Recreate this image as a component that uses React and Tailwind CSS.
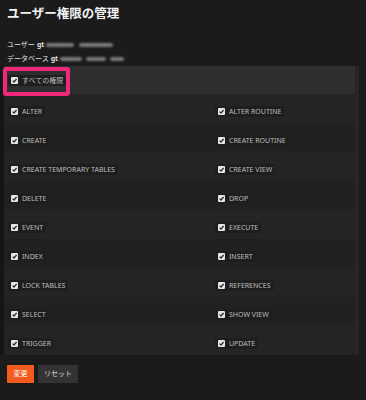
import React from 'react';

const PRIVS = [
  ['ALTER', 'ALTER ROUTINE'],
  ['CREATE', 'CREATE ROUTINE'],
  ['CREATE TEMPORARY TABLES', 'CREATE VIEW'],
  ['DELETE', 'DROP'],
  ['EVENT', 'EXECUTE'],
  ['INDEX', 'INSERT'],
  ['LOCK TABLES', 'REFERENCES'],
  ['SELECT', 'SHOW VIEW'],
  ['TRIGGER', 'UPDATE'],
];

const Check = () => (
  <svg width="7" height="7" viewBox="0 0 7 7" className="shrink-0">
    <rect x="0" y="0" width="7" height="7" rx="1" fill="#e6e6e6" />
    <path d="M1.6 3.6 L3 5 L5.6 2" stroke="#2a2a2a" strokeWidth="1.2" fill="none" />
  </svg>
);

const Priv = ({ label }) => (
  <span className="inline-flex items-center gap-[4px] bg-[#1e1e1e] px-[3px] py-[2px] rounded-[2px]">
    <Check />
    <span className="text-[7px] text-[#bdbdbd] leading-none">{label}</span>
  </span>
);

export default function App() {
  return (
    <div
      className="w-[366px] h-[400px] bg-[#1b1b1b] text-white overflow-hidden"
      style={{ fontFamily: '"Noto Sans", "Noto Sans CJK JP", sans-serif' }}
    >
      <h1 className="pl-[7px] pt-[5px] text-[12.5px] font-bold leading-[18px] text-[#f2f2f2]">
        ユーザー権限の管理
      </h1>

      <div className="mt-[17px] pl-[7px] flex flex-col gap-[5px] text-[7px] leading-[9px] text-[#e0e0e0]">
        <div className="flex items-center gap-[2px]">
          <span>ユーザー</span>
          <span className="font-bold">gt</span>
          <span className="h-[4px] w-[28px] rounded-full bg-[#7a7a7a] blur-[1px]" />
          <span className="ml-[3px] h-[4px] w-[34px] rounded-full bg-[#7a7a7a] blur-[1px]" />
        </div>
        <div className="flex items-center gap-[2px]">
          <span>データベース</span>
          <span className="font-bold">gt</span>
          <span className="h-[4px] w-[22px] rounded-full bg-[#7a7a7a] blur-[1px]" />
          <span className="ml-[2px] h-[4px] w-[20px] rounded-full bg-[#7a7a7a] blur-[1px]" />
          <span className="ml-[2px] h-[4px] w-[14px] rounded-full bg-[#7a7a7a] blur-[1px]" />
        </div>
      </div>

      <div className="mt-[3px] flex">
        <div className="w-[355px] border-l-[4px] border-[#151515] bg-[#222222]">
          <div className="relative h-[28px] bg-[#2e2e2e] flex items-center pl-[4px]">
            <div className="absolute left-[-1px] top-[1px] w-[67px] h-[29px] rounded-[3px] border-[4px] border-[#f0287a]" />
            <Priv label="すべての権限" />
          </div>
          {PRIVS.map(([a, b], i) => (
            <div
              key={a}
              className={`grid grid-cols-[208px_1fr] h-[29px] items-center ${i % 2 === 0 ? 'bg-[#242424]' : 'bg-[#212121]'}`}
            >
              <div className="pl-[4px]">
                <Priv label={a} />
              </div>
              <div className="pl-[3px]">
                <Priv label={b} />
              </div>
            </div>
          ))}
        </div>
        <div className="w-[4px] bg-[#262626]" />
      </div>

      <div className="mt-[10px] pl-[7px] flex gap-[4px]">
        <button className="h-[18px] w-[27px] bg-[#f25a1e] text-[7px] text-white rounded-[1px]">変更</button>
        <button className="h-[18px] w-[40px] bg-[#333333] text-[7px] text-[#dddddd] rounded-[1px]">リセット</button>
      </div>
    </div>
  );
}
